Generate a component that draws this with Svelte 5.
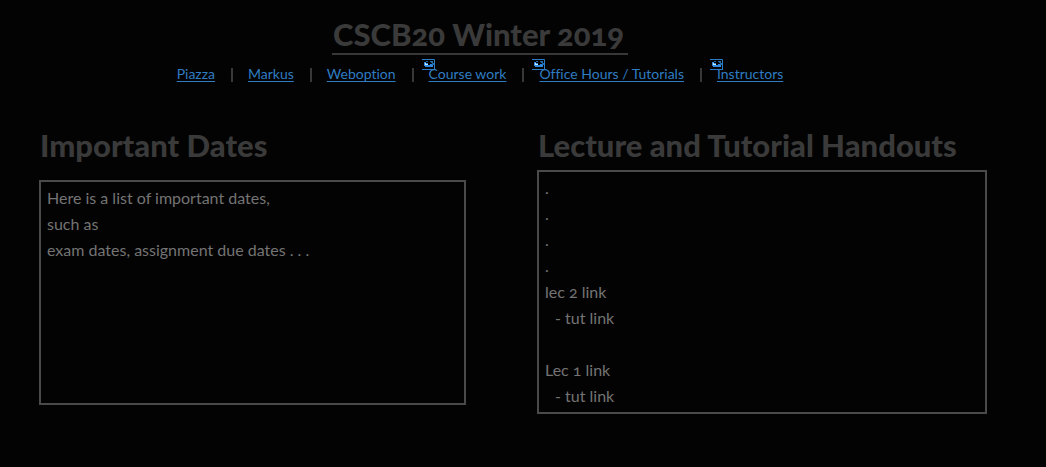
<script>
  const links = [
    { label: 'Piazza', marked: false },
    { label: 'Markus', marked: false },
    { label: 'Weboption', marked: false },
    { label: 'Course work', marked: true },
    { label: 'Office Hours / Tutorials', marked: true },
    { label: 'Instructors', marked: true }
  ];
</script>

<header>
  <h1>CSCB20 Winter 2019</h1>
  <nav>
    {#each links as link}
      <a href="#top">
        {link.label}
        {#if link.marked}
          <svg viewBox="0 0 13 11" width="13" height="11" aria-hidden="true">
            <path d="M0 .5H12.5V10.5M0 10.5H13" fill="none" stroke="#2a7cc4" />
            <path d="M2 3H4V4H6V6H8V5H10V6H11V8H3V7H2Z" fill="#2f8ae0" />
            <path d="M4 2H6V3H4ZM8 2H11V4H9V3H8ZM10 4H12V6H10Z" fill="#2468a4" />
            <path d="M3 4H4V5H6V6H3Z" fill="#c8ecff" />
          </svg>
        {/if}
      </a>
    {/each}
  </nav>
</header>

<main>
  <section>
    <h2>Important Dates</h2>
    <div class="box dates">
      <p>Here is a list of important dates,</p>
      <p>such as</p>
      <p>exam dates, assignment due dates . . .</p>
    </div>
  </section>
  <section>
    <h2>Lecture and Tutorial Handouts</h2>
    <div class="box">
      <p>.</p>
      <p>.</p>
      <p>.</p>
      <p>.</p>
      <p>lec 2 link</p>
      <p class="sub">- tut link</p>
      <p class="gap">Lec 1 link</p>
      <p class="sub">- tut link</p>
    </div>
  </section>
</main>

<style>
  :global(body) {
    background: #030303;
    color: #747474;
    font-family: Lato, 'Open Sans', sans-serif;
    font-variant-numeric: oldstyle-nums;
  }
  h1, h2, p { margin: 0; }
  h1, h2 {
    color: #3a3a3a;
    font-size: 31px;
    font-weight: 900;
    line-height: 37px;
  }
  header {
    max-width: 960px;
    padding-top: 16px;
    text-align: center;
  }
  h1 {
    display: inline-block;
    padding: 0 4px 0 1px;
    border-bottom: 2px solid #383838;
  }
  nav {
    display: flex;
    justify-content: center;
    margin-top: 9px;
    font-size: 14px;
    font-variant-ligatures: no-common-ligatures;
    line-height: 20px;
  }
  a {
    position: relative;
    color: #2f7cc2;
    text-decoration: underline;
    text-underline-offset: 2px;
  }
  a + a {
    margin-left: 16px;
    padding-left: 17px;
    background: linear-gradient(#383838, #383838) 0 4px / 2px 14px no-repeat;
  }
  svg {
    position: absolute;
    top: -5px;
    left: 10px;
  }
  main {
    display: grid;
    grid-template-columns: 427fr 450fr;
    gap: 71px;
    padding: 43px 59px 48px 39px;
  }
  h2 {
    padding-left: 1px;
    white-space: nowrap;
  }
  .box {
    margin-top: 6px;
    padding: 3px 6px;
    border: 2px solid #4a4a4a;
    font-size: 16px;
    line-height: 26px;
  }
  .dates {
    min-height: 215px;
    margin-top: 16px;
  }
  .sub { padding-left: 10px; }
  .gap { margin-top: 26px; }
</style>
